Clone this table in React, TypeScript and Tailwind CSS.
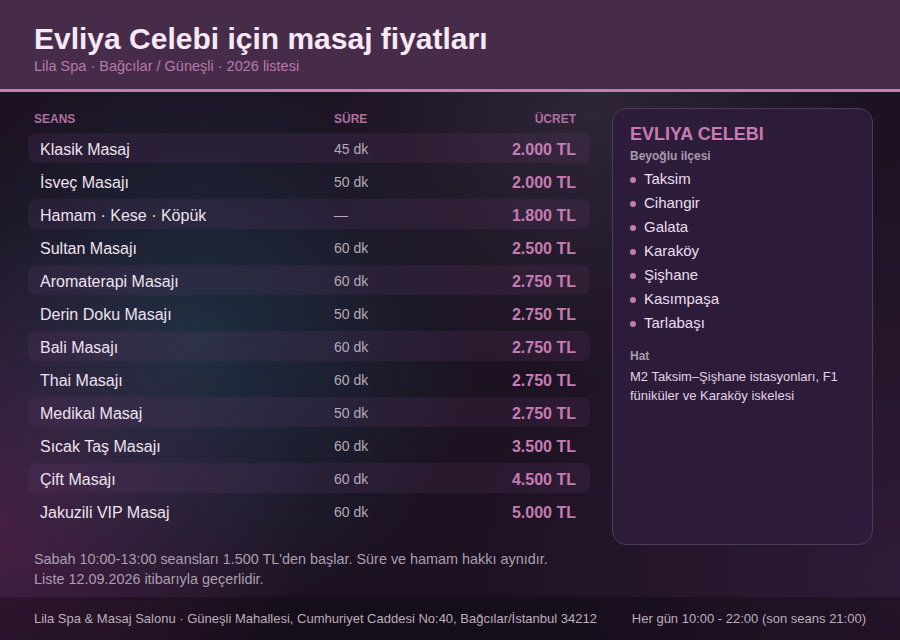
import React from 'react';

const rows = [
  { name: 'Klasik Masaj', time: '45 dk', price: '2.000 TL' },
  { name: 'İsveç Masajı', time: '50 dk', price: '2.000 TL' },
  { name: 'Hamam · Kese · Köpük', time: '—', price: '1.800 TL' },
  { name: 'Sultan Masajı', time: '60 dk', price: '2.500 TL' },
  { name: 'Aromaterapi Masajı', time: '60 dk', price: '2.750 TL' },
  { name: 'Derin Doku Masajı', time: '50 dk', price: '2.750 TL' },
  { name: 'Bali Masajı', time: '60 dk', price: '2.750 TL' },
  { name: 'Thai Masajı', time: '60 dk', price: '2.750 TL' },
  { name: 'Medikal Masaj', time: '50 dk', price: '2.750 TL' },
  { name: 'Sıcak Taş Masajı', time: '60 dk', price: '3.500 TL' },
  { name: 'Çift Masajı', time: '60 dk', price: '4.500 TL' },
  { name: 'Jakuzili VIP Masaj', time: '60 dk', price: '5.000 TL' },
];

const areas = ['Taksim', 'Cihangir', 'Galata', 'Karaköy', 'Şişhane', 'Kasımpaşa', 'Tarlabaşı'];

export default function App() {
  return (
    <div className="w-[900px] h-[640px] flex flex-col overflow-hidden font-['Liberation_Sans',Arial,sans-serif] bg-[#1c1222] bg-[image:radial-gradient(circle_at_22%_52%,rgba(30,90,110,0.38),transparent_36%),radial-gradient(circle_at_0%_82%,rgba(125,50,115,0.42),transparent_30%),radial-gradient(circle_at_66%_18%,rgba(95,95,115,0.26),transparent_34%),radial-gradient(circle_at_100%_90%,rgba(90,45,100,0.3),transparent_40%)]">
      <header className="h-[92px] shrink-0 bg-[#472c49] border-b-[3px] border-[#c27fae] px-[34px] pt-[21px]">
        <h1 className="text-[30px] leading-[35px] font-bold text-[#f6e8f6]">Evliya Celebi için masaj fiyatları</h1>
        <p className="text-[14.5px] leading-[18px] mt-[1px] text-[#b67aad]">Lila Spa · Bağcılar / Güneşli · 2026 listesi</p>
      </header>

      <main className="flex-1 flex gap-[22px] pl-[28px] pr-[27px] pt-[16px]">
        <div className="w-[562px] flex flex-col">
          <div className="grid grid-cols-[300px_1fr_auto] pl-[6px] pr-[14px] pt-[4px] pb-[7px] text-[12px] leading-[14px] font-bold text-[#b06fa0]">
            <span>SEANS</span>
            <span>SÜRE</span>
            <span>ÜCRET</span>
          </div>
          <div className="flex flex-col gap-[3px]">
            {rows.map((r, i) => (
              <div
                key={r.name}
                className={`grid grid-cols-[294px_1fr_auto] items-center h-[30px] pt-[3px] pl-[12px] pr-[14px] rounded-[8px] ${i % 2 === 0 ? 'bg-[rgba(120,70,130,0.15)]' : ''}`}
              >
                <span className="text-[16px] text-[#eee2ef]">{r.name}</span>
                <span className="text-[14px] text-[#b5a9b8]">{r.time}</span>
                <span className="text-[16px] font-bold text-[#c67cb3]">{r.price}</span>
              </div>
            ))}
          </div>
          <div className="mt-[23px] pl-[6px] text-[14.4px] leading-[20px] text-[#ab9fae]">
            <p>Sabah 10:00-13:00 seansları 1.500 TL'den başlar. Süre ve hamam hakkı aynıdır.</p>
            <p>Liste 12.09.2026 itibarıyla geçerlidir.</p>
          </div>
        </div>

        <aside className="w-[261px] h-[437px] rounded-[14px] border border-[#4b3a5a] bg-[#2e1d3c]/90 px-[17px] pt-[15px]">
          <h2 className="text-[18px] leading-[20px] font-bold text-[#c67cb3]">EVLIYA CELEBI</h2>
          <p className="mt-[4px] text-[12px] leading-[16px] font-bold text-[#a99aac]">Beyoğlu ilçesi</p>
          <ul className="mt-[3px]">
            {areas.map(a => (
              <li key={a} className="flex items-center gap-[8px] h-[24px] text-[15px] text-[#ecdeee]">
                <span className="w-[6px] h-[6px] rounded-full bg-[#c67cb3] mt-[2px]" />
                {a}
              </li>
            ))}
          </ul>
          <p className="mt-[13px] text-[12px] leading-[16px] font-bold text-[#a99aac]">Hat</p>
          <p className="mt-[3px] text-[13px] leading-[19px] text-[#e2d4e4]">M2 Taksim–Şişhane istasyonları, F1 füniküler ve Karaköy iskelesi</p>
        </aside>
      </main>

      <footer className="h-[43px] shrink-0 flex items-center justify-between px-[34px] bg-black/25 text-[13px] text-[#bcaebd]">
        <span>Lila Spa &amp; Masaj Salonu · Güneşli Mahallesi, Cumhuriyet Caddesi No:40, Bağcılar/İstanbul 34212</span>
        <span>Her gün 10:00 - 22:00 (son seans 21:00)</span>
      </footer>
    </div>
  );
}
